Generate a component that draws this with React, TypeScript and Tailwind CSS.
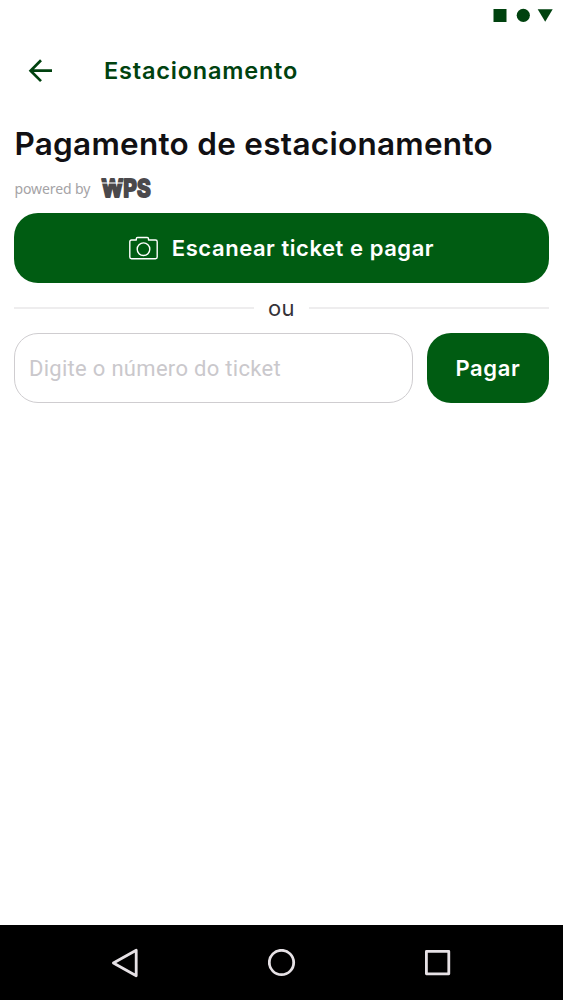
import { useState } from 'react';

/** Status bar glyphs: square, circle and triangle */
function StatusBar() {
  return (
    <div className="flex h-[30px] shrink-0 items-center justify-end pr-[9px] text-[#00420f]">
      <svg width="62" height="16" viewBox="0 0 62 16" fill="currentColor" aria-hidden="true">
        <rect x="1.5" y="2" width="13" height="13" />
        <circle cx="31.3" cy="8.3" r="6.6" />
        <path d="M45.7 2.2h15L53.2 14.8z" />
      </svg>
    </div>
  );
}

function Header() {
  return (
    <header className="flex h-[82px] shrink-0 items-center pl-7 text-[#00420f]">
      <button type="button" aria-label="Voltar" className="h-[26px] w-[26px]">
        <svg width="26" height="26" viewBox="0 0 26 26" fill="none" stroke="currentColor" strokeWidth="2.7" aria-hidden="true">
          <path d="M24 12.7H3M13 2.3 2.6 12.7 13 23.1" />
        </svg>
      </button>
      <h1 className="ml-[50px] text-[23.5px] leading-7 font-[560] tracking-[0.8px]">Estacionamento</h1>
    </header>
  );
}

function WpsLogo() {
  return (
    <svg width="56" height="36" viewBox="-2 -6 56 36" className="overflow-visible" role="img" aria-label="WPS">
      <text
        x="1.6"
        y="20.8"
        textLength="49"
        lengthAdjust="spacingAndGlyphs"
        className="fill-[#4b494c] stroke-[#4b494c] font-[Inter] text-[24px] font-bold"
        strokeWidth="2"
        strokeLinejoin="round"
      >
        WPS
      </text>
      <path d="M0 7h23.5" stroke="white" strokeWidth="1.1" />
    </svg>
  );
}

function CameraIcon() {
  return (
    <svg width="29" height="24" viewBox="0 0 29 24" fill="none" stroke="currentColor" strokeWidth="1.4" strokeLinejoin="round" aria-hidden="true">
      <path d="M2.5 4h4.8V2.8a1.3 1.3 0 0 1 1.3-1.3h9.6a1.3 1.3 0 0 1 1.3 1.3V4h7a1.7 1.7 0 0 1 1.7 1.7v15.4a1.7 1.7 0 0 1-1.7 1.7h-24a1.7 1.7 0 0 1-1.7-1.7V5.7A1.7 1.7 0 0 1 2.5 4z" />
      <circle cx="14.5" cy="13.2" r="6.3" />
    </svg>
  );
}

function NavigationBar() {
  return (
    <nav className="flex h-[75px] shrink-0 items-center justify-between bg-black pr-[111px] pl-[111px] text-[#e6e1e5]">
      <svg width="28" height="30" viewBox="0 0 28 30" fill="none" stroke="currentColor" strokeWidth="2.8" strokeLinejoin="round" aria-hidden="true">
        <path d="M25.2 2.2v25.6L2.4 15z" />
      </svg>
      <svg width="28" height="28" viewBox="0 0 28 28" fill="none" stroke="currentColor" strokeWidth="2.8" aria-hidden="true">
        <circle cx="13.5" cy="13.5" r="12.2" />
      </svg>
      <svg width="28" height="28" viewBox="0 0 28 28" fill="none" stroke="currentColor" strokeWidth="2.8" strokeLinejoin="round" aria-hidden="true">
        <rect x="2.4" y="2.4" width="22.4" height="22.4" />
      </svg>
    </nav>
  );
}

export default function App() {
  const [ticket, setTicket] = useState('');

  return (
    <div className="flex h-screen flex-col bg-white font-[Inter,sans-serif]">
      <StatusBar />
      <Header />

      <main className="flex flex-1 flex-col px-[14.4px] pt-3">
        <h2 className="text-[31.5px] leading-10 font-[560] tracking-[0.28px] whitespace-nowrap text-[#111013]">
          Pagamento de estacionamento
        </h2>

        <div className="flex h-12 items-center">
          <span className="pt-0.5 font-['Noto_Sans',sans-serif] text-[14px] leading-6 tracking-[-0.08px] text-[#a5a3a6]">
            powered by
          </span>
          <span className="ml-[8px]">
            <WpsLogo />
          </span>
        </div>

        <button
          type="button"
          className="mt-px flex h-[70px] shrink-0 items-center justify-center gap-[14px] rounded-[24px] bg-[#005c12] text-[22px] font-[560] tracking-[0.55px] text-white"
        >
          <CameraIcon />
          <span>Escanear ticket e pagar</span>
        </button>

        {/* Divider */}
        <div className="flex h-[50px] shrink-0 items-center gap-[14px] text-[22px] text-[#353338]">
          <span className="h-[2px] flex-1 bg-[#eeedee]" />
          <span className="tracking-[0.3px]">ou</span>
          <span className="h-[2px] flex-1 bg-[#eeedee]" />
        </div>

        <div className="flex gap-[14px]">
          <input
            value={ticket}
            onChange={(e) => setTicket(e.target.value)}
            placeholder="Digite o número do ticket"
            className="h-[70px] min-w-0 flex-1 rounded-[24px] border-[1.5px] border-[#cfcdd0] px-[13.5px] font-[Roboto,sans-serif] text-[22px] tracking-[0.3px] outline-none placeholder:text-[#cac8cc]"
          />
          <button
            type="button"
            className="h-[70px] w-[121.5px] rounded-[24px] bg-[#005c12] text-[22px] font-[560] tracking-[0.6px] text-white"
          >
            Pagar
          </button>
        </div>
      </main>

      <NavigationBar />
    </div>
  );
}
